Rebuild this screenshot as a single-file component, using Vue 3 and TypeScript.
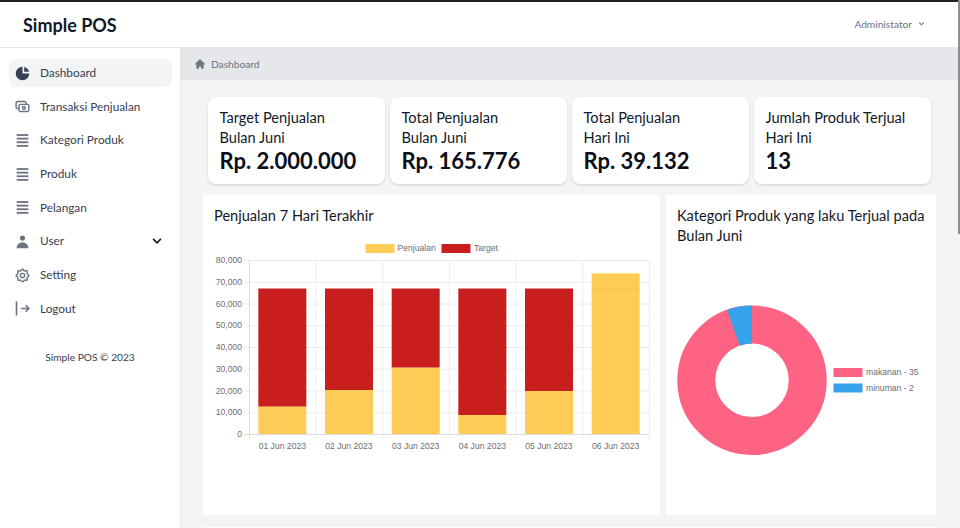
<script setup lang="ts">
interface NavItem { label: string; icon: string; active?: boolean; caret?: boolean }
interface Stat { title: string; sub: string; value: string }

const nav: NavItem[] = [
  { label: 'Dashboard', icon: 'pie', active: true },
  { label: 'Transaksi Penjualan', icon: 'cash' },
  { label: 'Kategori Produk', icon: 'list' },
  { label: 'Produk', icon: 'list' },
  { label: 'Pelangan', icon: 'list' },
  { label: 'User', icon: 'user', caret: true },
  { label: 'Setting', icon: 'cog' },
  { label: 'Logout', icon: 'logout' }
]

const stats: Stat[] = [
  { title: 'Target Penjualan', sub: 'Bulan Juni', value: 'Rp. 2.000.000' },
  { title: 'Total Penjualan', sub: 'Bulan Juni', value: 'Rp. 165.776' },
  { title: 'Total Penjualan', sub: 'Hari Ini', value: 'Rp. 39.132' },
  { title: 'Jumlah Produk Terjual', sub: 'Hari Ini', value: '13' }
]

// Chart coordinates are relative to the chart card (card origin 203,195).
const ox = 46
const plotW = 400
const plotTop = 65
const plotBottom = 239
const colW = plotW / 6
const ticks = [80000, 70000, 60000, 50000, 40000, 30000, 20000, 10000, 0]
const tickY = (v: number) => plotBottom - (v / 80000) * (plotBottom - plotTop)
const columns = [
  { label: '01 Jun 2023', y: 211.7 },
  { label: '02 Jun 2023', y: 195 },
  { label: '03 Jun 2023', y: 172.7 },
  { label: '04 Jun 2023', y: 220 },
  { label: '05 Jun 2023', y: 196 },
  { label: '06 Jun 2023', y: 78.3 }
].map((c, i) => ({ ...c, x: ox + colW * i + colW / 2 }))
const redTop = 93.5
const barW = 48
const gridXs = Array.from({ length: 7 }, (_, i) => ox + colW * i)
</script>

<template>
  <div class="page">
    <header class="topbar">
      <div class="brand">Simple POS</div>
      <div class="account">
        <span>Administator</span>
        <svg class="account-caret" viewBox="0 0 20 20" fill="none" stroke="currentColor" stroke-width="2.4"><path d="M5 8l5 5 5-5" /></svg>
      </div>
    </header>

    <div class="body">
      <aside class="sidebar">
        <ul class="nav">
          <li v-for="item in nav" :key="item.label" class="nav-item" :class="{ active: item.active }">
            <svg v-if="item.icon === 'pie'" class="nav-icon" viewBox="0 0 20 20" fill="currentColor">
              <path d="M2 10a8 8 0 018-8v8h8a8 8 0 11-16 0z" />
              <path d="M12 2.252A8.014 8.014 0 0117.748 8H12V2.252z" />
            </svg>
            <svg v-else-if="item.icon === 'cash'" class="nav-icon" viewBox="0 0 24 24" fill="none" stroke="currentColor" stroke-width="2" stroke-linecap="round" stroke-linejoin="round">
              <path d="M17 9V7a2 2 0 00-2-2H5a2 2 0 00-2 2v6a2 2 0 002 2h2m2 4h10a2 2 0 002-2v-6a2 2 0 00-2-2H9a2 2 0 00-2 2v6a2 2 0 002 2zm7-5a2 2 0 11-4 0 2 2 0 014 0z" />
            </svg>
            <svg v-else-if="item.icon === 'list'" class="nav-icon" viewBox="0 0 16 16" fill="currentColor">
              <rect x="2.5" y="2" width="11" height="1.7" />
              <rect x="2.5" y="5.4" width="11" height="1.7" />
              <rect x="2.5" y="8.8" width="11" height="1.7" />
              <rect x="2.5" y="12.2" width="11" height="1.7" />
            </svg>
            <svg v-else-if="item.icon === 'user'" class="nav-icon" viewBox="0 0 20 20" fill="currentColor">
              <path d="M10 9a3 3 0 100-6 3 3 0 000 6zm-7 9a7 7 0 1114 0H3z" />
            </svg>
            <svg v-else-if="item.icon === 'cog'" class="nav-icon" viewBox="0 0 24 24" fill="none" stroke="currentColor" stroke-width="2" stroke-linecap="round" stroke-linejoin="round">
              <path d="M10.325 4.317c.426-1.756 2.924-1.756 3.35 0a1.724 1.724 0 002.573 1.066c1.543-.94 3.31.826 2.37 2.37a1.724 1.724 0 001.065 2.572c1.756.426 1.756 2.924 0 3.35a1.724 1.724 0 00-1.066 2.573c.94 1.543-.826 3.31-2.37 2.37a1.724 1.724 0 00-2.572 1.065c-.426 1.756-2.924 1.756-3.35 0a1.724 1.724 0 00-2.573-1.066c-1.543.94-3.31-.826-2.37-2.37a1.724 1.724 0 00-1.065-2.572c-1.756-.426-1.756-2.924 0-3.35a1.724 1.724 0 001.066-2.573c-.94-1.543.826-3.31 2.37-2.37.996.608 2.296.07 2.572-1.065z" />
              <path d="M15 12a3 3 0 11-6 0 3 3 0 016 0z" />
            </svg>
            <svg v-else class="nav-icon" viewBox="0 0 17 17" fill="none" stroke="currentColor" stroke-width="1.6" stroke-linecap="round" stroke-linejoin="round">
              <path d="M2.5 2v13M7.5 8.5h7.5M12.2 5.7L15 8.5l-2.8 2.8" />
            </svg>
            <span class="nav-label">{{ item.label }}</span>
            <svg v-if="item.caret" class="nav-caret" viewBox="0 0 20 20" fill="none" stroke="currentColor" stroke-width="2.8"><path d="M3.5 6.5l6.5 6.5 6.5-6.5" /></svg>
          </li>
        </ul>
        <div class="copyright">Simple POS © 2023</div>
      </aside>

      <main class="main">
        <div class="crumb">
          <svg class="crumb-icon" viewBox="0 0 20 20" fill="currentColor">
            <path d="M10.707 2.293a1 1 0 00-1.414 0l-7 7a1 1 0 001.414 1.414L4 10.414V17a1 1 0 001 1h2a1 1 0 001-1v-2a1 1 0 011-1h2a1 1 0 011 1v2a1 1 0 001 1h2a1 1 0 001-1v-6.586l.293.293a1 1 0 001.414-1.414l-7-7z" />
          </svg>
          <span>Dashboard</span>
        </div>

        <section class="stats">
          <div v-for="s in stats" :key="s.title + s.sub" class="stat">
            <div class="stat-title">{{ s.title }}</div>
            <div class="stat-title">{{ s.sub }}</div>
            <div class="stat-value">{{ s.value }}</div>
          </div>
        </section>

        <section class="charts">
          <div class="panel panel-bar">
            <h2 class="panel-title">Penjualan 7 Hari Terakhir</h2>
            <svg class="chart" viewBox="0 0 457 320" width="457" height="320">
              <g class="grid">
                <line v-for="t in ticks" :key="t" :x1="ox - 5" :x2="ox + plotW" :y1="tickY(t) + 0.5" :y2="tickY(t) + 0.5" :class="{ axis: t === 0 }" />
                <line v-for="(x, i) in gridXs" :key="x" :x1="x + 0.5" :x2="x + 0.5" :y1="plotTop" :y2="plotBottom + 5" :class="{ axis: i === 0 }" />
              </g>
              <g v-for="c in columns" :key="c.label">
                <rect class="bar-red" :x="c.x - barW / 2" :y="redTop" :width="barW" :height="Math.max(c.y - redTop, 0)" />
                <rect class="bar-yellow" :x="c.x - barW / 2" :y="c.y" :width="barW" :height="plotBottom - c.y" />
                <text class="tick" :x="c.x" y="254" text-anchor="middle">{{ c.label }}</text>
              </g>
              <rect class="bar-yellow-line" :x="columns[5].x - barW / 2" :y="redTop" :width="barW" height="1" />
              <text v-for="t in ticks" :key="'l' + t" class="tick" x="39" :y="tickY(t) + 3" text-anchor="end">{{ t.toLocaleString('en-US') }}</text>
              <rect class="legend-yellow" x="162.5" y="49" width="29" height="9" />
              <text class="tick" x="194.5" y="56">Penjualan</text>
              <rect class="legend-red" x="238.5" y="49" width="29" height="9" />
              <text class="tick" x="271" y="56">Target</text>
            </svg>
          </div>

          <div class="panel panel-donut">
            <h2 class="panel-title">Kategori Produk yang laku Terjual pada Bulan Juni</h2>
            <svg class="chart" viewBox="0 0 270 320" width="270" height="320">
              <circle class="donut-pink" cx="86" cy="185.3" r="55.7" />
              <path class="donut-blue" d="M86 110.6 A74.7 74.7 0 0 0 61.1 114.9 L73.8 150.7 A36.7 36.7 0 0 1 86 148.6 Z" />
              <rect class="legend-pink" x="167.5" y="173" width="29" height="9" />
              <text class="tick" x="200" y="180">makanan - 35</text>
              <rect class="legend-blue" x="167.5" y="188.5" width="29" height="9" />
              <text class="tick" x="200" y="195.5">minuman - 2</text>
            </svg>
          </div>
        </section>

        <section class="panel-next"></section>
      </main>
    </div>
    <div class="scrollbar"><div class="scrollbar-thumb"></div></div>
  </div>
</template>

<style>
html, body { margin: 0; overflow: hidden; background: #fff; }
</style>

<style scoped>
.page {
  position: relative;
  width: 960px;
  height: 528px;
  overflow: hidden;
  display: flex;
  flex-direction: column;
  font-family: "Lato", "Noto Sans", sans-serif;
  color: #111827;
  background: #fff;
}
.topbar {
  flex: none;
  height: 45px;
  border-top: 2px solid #1f2024;
  border-bottom: 1px solid #e5e7eb;
  display: flex;
  align-items: center;
  justify-content: space-between;
  padding: 0 34px 0 23px;
}
.brand { font-size: 18px; font-weight: 700; color: #111827; }
.account { display: flex; align-items: center; gap: 5px; font-size: 10.2px; color: #6b7280; padding-bottom: 2px; }
.account-caret { width: 9px; height: 9px; }
.body { flex: 1; display: flex; min-height: 0; }
.sidebar {
  flex: none;
  width: 181px;
  padding: 11px 8px 0 9px;
  box-sizing: border-box;
  border-right: 1px solid #e5e7eb;
}
.nav { list-style: none; margin: 0; padding: 0; }
.nav-item {
  height: 28px;
  margin-bottom: 5.7px;
  padding: 0 9px 0 5px;
  display: flex;
  align-items: center;
  border-radius: 8px;
  font-size: 11.8px;
  color: #374151;
}
.nav-item.active { background: #f3f4f6; }
.nav-icon { width: 17px; height: 17px; flex: none; color: #6b7280; margin-right: 9px; }
.active .nav-icon { color: #374151; }
.nav-label { flex: 1; padding-bottom: 1px; }
.nav-caret { width: 12px; height: 12px; color: #111827; }
.copyright { margin-top: 28px; text-align: center; font-size: 10.2px; color: #374151; padding-right: 1px; }
.main { flex: 1; background: #f3f4f6; min-width: 0; }
.crumb {
  height: 32px;
  box-sizing: border-box;
  background: #e5e7eb;
  display: flex;
  align-items: center;
  padding: 0 0 1px 13px;
  gap: 5px;
  font-size: 10.2px;
  color: #6b7280;
}
.crumb-icon { width: 12px; height: 12px; color: #6b7280; }
.stats {
  display: grid;
  grid-template-columns: repeat(4, 177px);
  gap: 5px;
  margin: 17px 0 0 27px;
}
.stat {
  height: 87px;
  box-sizing: border-box;
  padding: 11px 11.5px 0;
  background: #fff;
  border-radius: 8px;
  box-shadow: 0 1px 3px rgba(0, 0, 0, 0.1), 0 1px 2px rgba(0, 0, 0, 0.06);
}
.stat-title { font-size: 14.6px; line-height: 20px; color: #111827; }
.stat-value { font-size: 22px; line-height: 25px; font-weight: 700; color: #0b0f19; }
.charts { display: flex; gap: 6px; margin: 11px 0 0 22px; }
.panel { height: 320px; background: #fff; position: relative; }
.panel-bar { width: 457px; }
.panel-donut { width: 270px; }
.panel-title {
  margin: 0;
  padding: 11px 5px 0 11px;
  font-size: 14.6px;
  font-weight: 400;
  line-height: 20px;
  color: #111827;
}
.chart { position: absolute; left: 0; top: 0; display: block; }
.grid line { stroke: #ececee; stroke-width: 1; }
.grid line.axis { stroke: #dcdcde; }
.tick { font-family: "Liberation Sans", Arial, sans-serif; font-size: 8.6px; fill: #6e6e6e; }
.bar-red { fill: #c81e1e; }
.bar-yellow { fill: #ffcd56; }
.bar-yellow-line { fill: #f5c453; }
.legend-yellow { fill: #ffcd56; }
.legend-red { fill: #c81e1e; }
.donut-pink { fill: none; stroke: #ff6384; stroke-width: 38; }
.donut-blue { fill: #36a2eb; }
.legend-pink { fill: #ff6384; }
.legend-blue { fill: #36a2eb; }
.panel-next { height: 10px; width: 733px; margin: 12px 0 0 22px; background: #fff; }
.scrollbar { position: absolute; right: 0; top: 0; bottom: 0; width: 2px; background: #f7f7f7; }
.scrollbar-thumb { height: 234px; background: #8f8f8f; }
</style>
